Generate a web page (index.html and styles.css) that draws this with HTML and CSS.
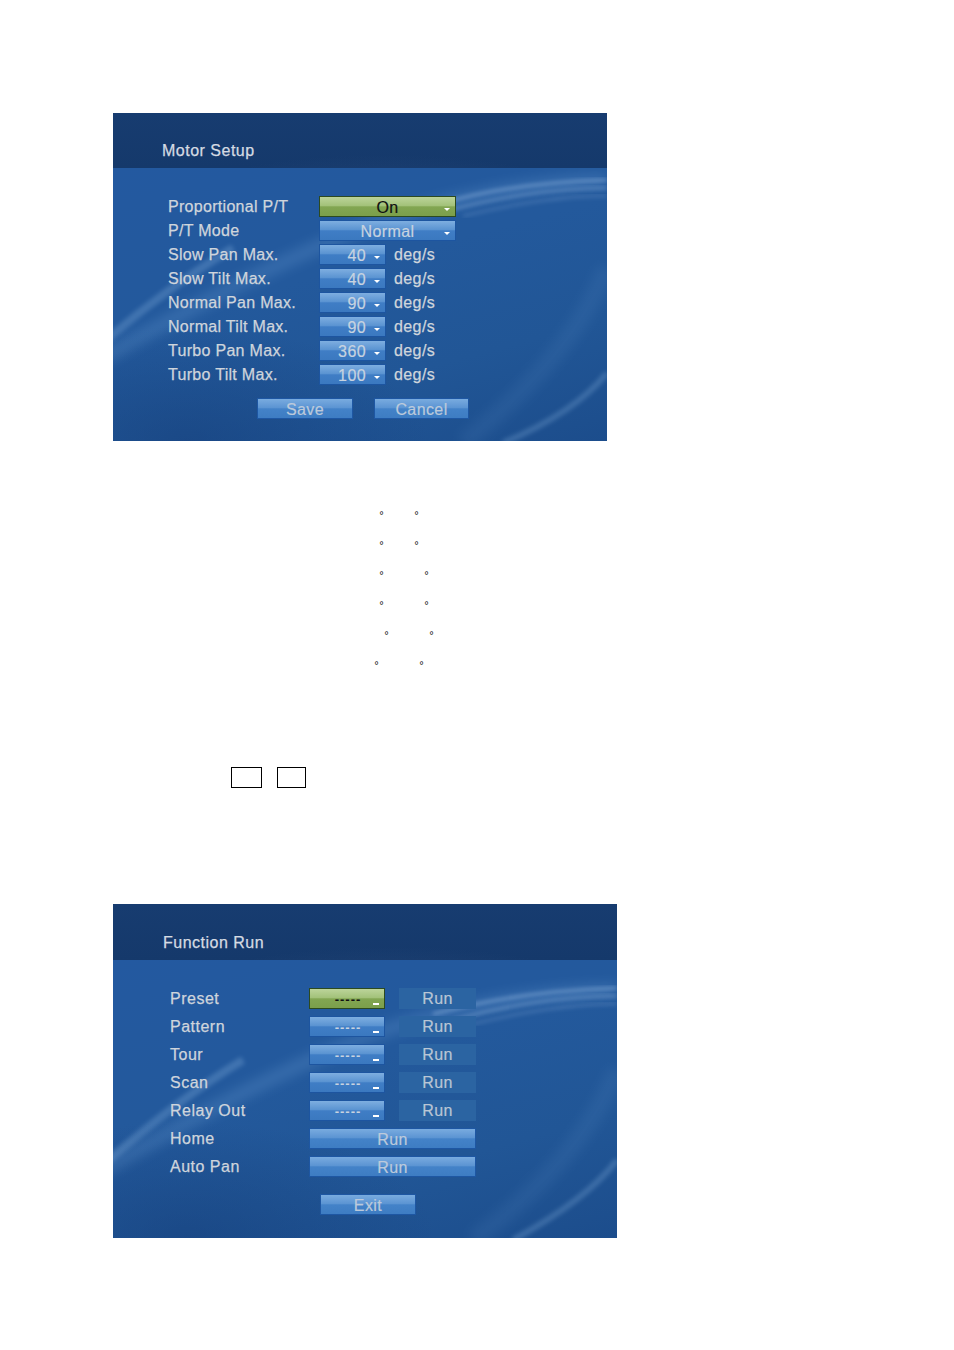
FILE: index.html
```html
<!DOCTYPE html>
<html>
<head>
<meta charset="utf-8">
<link rel="stylesheet" href="styles.css">
</head>
<body>
<div class="page">
  <div class="panel motor">
    <div class="panel-head"><span class="title">Motor Setup</span></div>
    <div class="panel-body">
      <svg class="swoosh" viewBox="0 0 494 273" preserveAspectRatio="none">
        <defs>
          <filter id="b1"><feGaussianBlur stdDeviation="2"/></filter>
          <filter id="b2"><feGaussianBlur stdDeviation="6"/></filter>
        </defs>
        <path d="M494 12 C420 14 330 30 250 60 C150 100 60 150 -10 190" stroke="#8fc0f0" stroke-width="14" fill="none" opacity="0.18" filter="url(#b2)"/>
        <path d="M494 12 C430 14 370 22 320 38" stroke="#cfe6ff" stroke-width="2" fill="none" opacity="0.5" filter="url(#b1)"/>
        <path d="M494 20 C440 20 380 30 330 44" stroke="#cfe6ff" stroke-width="2" fill="none" opacity="0.4" filter="url(#b1)"/>
        <path d="M494 28 C450 28 400 36 350 48" stroke="#cfe6ff" stroke-width="1.5" fill="none" opacity="0.3" filter="url(#b1)"/>
        <path d="M120 80 C70 110 30 140 -10 175" stroke="#a8d0f5" stroke-width="8" fill="none" opacity="0.22" filter="url(#b1)"/>
        <path d="M494 205 C470 235 430 258 390 275" stroke="#a8d0f5" stroke-width="6" fill="none" opacity="0.22" filter="url(#b1)"/>
        <path d="M494 100 C470 160 420 220 350 275" stroke="#8fc0f0" stroke-width="18" fill="none" opacity="0.08" filter="url(#b2)"/>
      </svg>
      <div class="rows">
        <div class="row"><span class="label">Proportional P/T</span><span class="sel wide green dark">On</span></div>
        <div class="row"><span class="label">P/T Mode</span><span class="sel wide">Normal</span></div>
        <div class="row"><span class="label">Slow Pan Max.</span><span class="sel short">40</span><span class="unit">deg/s</span></div>
        <div class="row"><span class="label">Slow Tilt Max.</span><span class="sel short">40</span><span class="unit">deg/s</span></div>
        <div class="row"><span class="label">Normal Pan Max.</span><span class="sel short">90</span><span class="unit">deg/s</span></div>
        <div class="row"><span class="label">Normal Tilt Max.</span><span class="sel short">90</span><span class="unit">deg/s</span></div>
        <div class="row"><span class="label">Turbo Pan Max.</span><span class="sel short">360</span><span class="unit">deg/s</span></div>
        <div class="row"><span class="label">Turbo Tilt Max.</span><span class="sel short">100</span><span class="unit">deg/s</span></div>
      </div>
      <div class="btns">
        <span class="btn save">Save</span>
        <span class="btn cancel">Cancel</span>
      </div>
    </div>
  </div>

  <div class="degs">
    <div class="drow d1"><span>°</span><span class="g35">°</span></div>
    <div class="drow d1"><span>°</span><span class="g35">°</span></div>
    <div class="drow d1"><span>°</span><span class="g45">°</span></div>
    <div class="drow d1"><span>°</span><span class="g45">°</span></div>
    <div class="drow d5"><span>°</span><span class="g45">°</span></div>
    <div class="drow d6"><span>°</span><span class="g45">°</span></div>
  </div>

  <div class="boxes">
    <span class="box b1"></span>
    <span class="box b2"></span>
  </div>

  <div class="panel func">
    <div class="panel-head"><span class="title">Function Run</span></div>
    <div class="panel-body">
      <svg class="swoosh" viewBox="0 0 504 278" preserveAspectRatio="none">
        <defs>
          <filter id="c1"><feGaussianBlur stdDeviation="2"/></filter>
          <filter id="c2"><feGaussianBlur stdDeviation="6"/></filter>
        </defs>
        <path d="M504 30 C420 32 330 48 250 78 C150 118 60 170 -10 210" stroke="#8fc0f0" stroke-width="14" fill="none" opacity="0.18" filter="url(#c2)"/>
        <path d="M504 28 C440 30 380 38 320 54" stroke="#cfe6ff" stroke-width="2" fill="none" opacity="0.5" filter="url(#c1)"/>
        <path d="M504 36 C450 36 390 46 340 60" stroke="#cfe6ff" stroke-width="2" fill="none" opacity="0.4" filter="url(#c1)"/>
        <path d="M504 44 C460 44 410 52 360 64" stroke="#cfe6ff" stroke-width="1.5" fill="none" opacity="0.3" filter="url(#c1)"/>
        <path d="M130 100 C80 130 30 170 -10 205" stroke="#a8d0f5" stroke-width="8" fill="none" opacity="0.22" filter="url(#c1)"/>
        <path d="M504 200 C480 232 440 258 400 280" stroke="#a8d0f5" stroke-width="6" fill="none" opacity="0.22" filter="url(#c1)"/>
        <path d="M504 110 C480 170 430 230 360 280" stroke="#8fc0f0" stroke-width="18" fill="none" opacity="0.08" filter="url(#c2)"/>
      </svg>
      <div class="frows">
        <div class="frow"><span class="flabel">Preset</span><span class="fsel green dark">-----</span><span class="run">Run</span></div>
        <div class="frow"><span class="flabel">Pattern</span><span class="fsel">-----</span><span class="run">Run</span></div>
        <div class="frow"><span class="flabel">Tour</span><span class="fsel">-----</span><span class="run">Run</span></div>
        <div class="frow"><span class="flabel">Scan</span><span class="fsel">-----</span><span class="run">Run</span></div>
        <div class="frow"><span class="flabel">Relay Out</span><span class="fsel">-----</span><span class="run">Run</span></div>
        <div class="frow"><span class="flabel">Home</span><span class="btn runwide">Run</span></div>
        <div class="frow"><span class="flabel">Auto Pan</span><span class="btn runwide">Run</span></div>
      </div>
      <div class="fbtns">
        <span class="btn exit">Exit</span>
      </div>
    </div>
  </div>
</div>
</body>
</html>
```

FILE: styles.css
```css
html, body {
  margin: 0;
  padding: 0;
  background: #ffffff;
}

body {
  font-family: "Liberation Sans", Arial, sans-serif;
}

.page {
  padding: 113px 0 0 113px;
}

.panel {
  position: relative;
  overflow: hidden;
  display: flex;
  flex-direction: column;
  background: #1f5391;
}

.panel.motor {
  width: 494px;
  height: 328px;
}

.panel.func {
  width: 504px;
  height: 334px;
  margin-top: 116px;
}

.panel-head {
  height: 55px;
  flex: none;
  box-sizing: border-box;
  display: flex;
  align-items: flex-end;
  padding-bottom: 8px;
  background:
    radial-gradient(ellipse 60% 120% at 55% 160%, rgba(60, 90, 140, 0.35), rgba(60, 90, 140, 0) 70%),
    linear-gradient(180deg, #173c70 0%, #15396b 100%);
}

.motor .panel-head {
  padding-left: 49px;
}

.func .panel-head {
  height: 56px;
  padding-left: 50px;
}

.title {
  color: #d5dbe3;
  font-size: 16px;
  letter-spacing: 0.5px;
  -webkit-text-stroke: 0.25px #d5dbe3;
}

.panel-body {
  position: relative;
  flex: 1;
  background:
    radial-gradient(ellipse 70% 60% at 15% 100%, rgba(20, 60, 120, 0.5), rgba(20, 60, 120, 0) 70%),
    linear-gradient(165deg, #2359a0 0%, #23599c 40%, #215696 70%, #1c4d8c 100%);
}

.swoosh {
  position: absolute;
  left: 0;
  top: 0;
  width: 100%;
  height: 100%;
  pointer-events: none;
}

.rows {
  position: relative;
  padding: 28px 0 0 55px;
}

.row {
  display: flex;
  align-items: center;
  height: 21px;
  margin-bottom: 3px;
}

.label {
  width: 151px;
  flex: none;
  color: #cfd5dc;
  font-size: 16px;
  letter-spacing: 0.3px;
  -webkit-text-stroke: 0.25px #cfd5dc;
}

.sel, .fsel {
  position: relative;
  box-sizing: border-box;
  height: 21px;
  border: 1px solid #1d55a0;
  background: linear-gradient(180deg, #7eaee0 0%, #5b94d2 45%, #3f7dc5 52%, #3b79c0 100%);
  color: #c7d3e0;
  font-size: 16px;
  line-height: 21px;
  letter-spacing: 0.4px;
  -webkit-text-stroke: 0.2px currentColor;
}

.sel.green, .fsel.green {
  border-color: #2c4a1f;
  background: linear-gradient(180deg, #bcd49a 0%, #a3c27a 45%, #82a652 52%, #7b9f4b 100%);
}

.dark {
  color: #111;
}

.sel::after {
  content: "";
  position: absolute;
  right: 5px;
  bottom: 5px;
  border-left: 3px solid transparent;
  border-right: 3px solid transparent;
  border-top: 3px solid #ffffff;
}

.sel.wide {
  width: 137px;
  text-align: center;
}

.sel.short {
  width: 67px;
  text-align: right;
  padding-right: 19px;
}

.unit {
  margin-left: 8px;
  color: #cfd5dc;
  font-size: 16px;
  letter-spacing: 0.4px;
  -webkit-text-stroke: 0.25px #cfd5dc;
}

.btns {
  position: relative;
  display: flex;
  gap: 21px;
  padding: 10px 0 0 144px;
}

.btn {
  box-sizing: border-box;
  display: inline-block;
  height: 21px;
  border: 1px solid #1e57a3;
  background: linear-gradient(180deg, #79abdf 0%, #5c95d3 45%, #4382c8 52%, #3e7dc3 100%);
  color: #bccadb;
  font-size: 16px;
  line-height: 21px;
  text-align: center;
  letter-spacing: 0.4px;
  -webkit-text-stroke: 0.2px #bccadb;
}

.btn.save {
  width: 96px;
}

.btn.cancel {
  width: 95px;
}

.degs {
  margin-top: 57px;
}

.drow {
  display: flex;
  height: 30px;
  align-items: center;
  font-family: "DejaVu Sans", sans-serif;
  font-size: 10px;
  color: #222;
  line-height: 10px;
}

.drow span {
  display: inline-block;
  width: 4px;
  position: relative;
  top: 3px;
}

.d1 { padding-left: 266px; }
.d5 { padding-left: 271px; }
.d6 { padding-left: 261px; }

.drow .g35 { margin-left: 31px; }
.drow .g45 { margin-left: 41px; }

.boxes {
  display: flex;
  gap: 15px;
  margin-top: 89px;
  padding-left: 118px;
}

.box {
  box-sizing: border-box;
  display: inline-block;
  height: 21px;
  border: 1px solid #000;
}

.box.b1 { width: 31px; }
.box.b2 { width: 29px; }

.frows {
  position: relative;
  padding: 28px 0 0 57px;
}

.frow {
  display: flex;
  align-items: center;
  height: 21px;
  margin-bottom: 7px;
}

.flabel {
  width: 139px;
  flex: none;
  color: #cfd5dc;
  font-size: 16px;
  letter-spacing: 0.5px;
  -webkit-text-stroke: 0.25px #cfd5dc;
}

.fsel {
  width: 76px;
  text-align: center;
  padding-left: 2px;
  font-size: 13px;
  letter-spacing: 1px;
  font-weight: bold;
  -webkit-text-stroke: 0;
}

.fsel::after {
  content: "";
  position: absolute;
  right: 5px;
  bottom: 3px;
  width: 6px;
  height: 2px;
  background: #ffffff;
}

.run {
  box-sizing: border-box;
  width: 77px;
  height: 21px;
  margin-left: 14px;
  background: #2b64a2;
  color: #b9c6d5;
  font-size: 16px;
  line-height: 22px;
  text-align: center;
  letter-spacing: 0.4px;
  -webkit-text-stroke: 0.2px #b9c6d5;
}

.btn.runwide {
  width: 167px;
}

.fbtns {
  position: relative;
  display: flex;
  padding: 10px 0 0 207px;
}

.btn.exit {
  width: 96px;
}
```
